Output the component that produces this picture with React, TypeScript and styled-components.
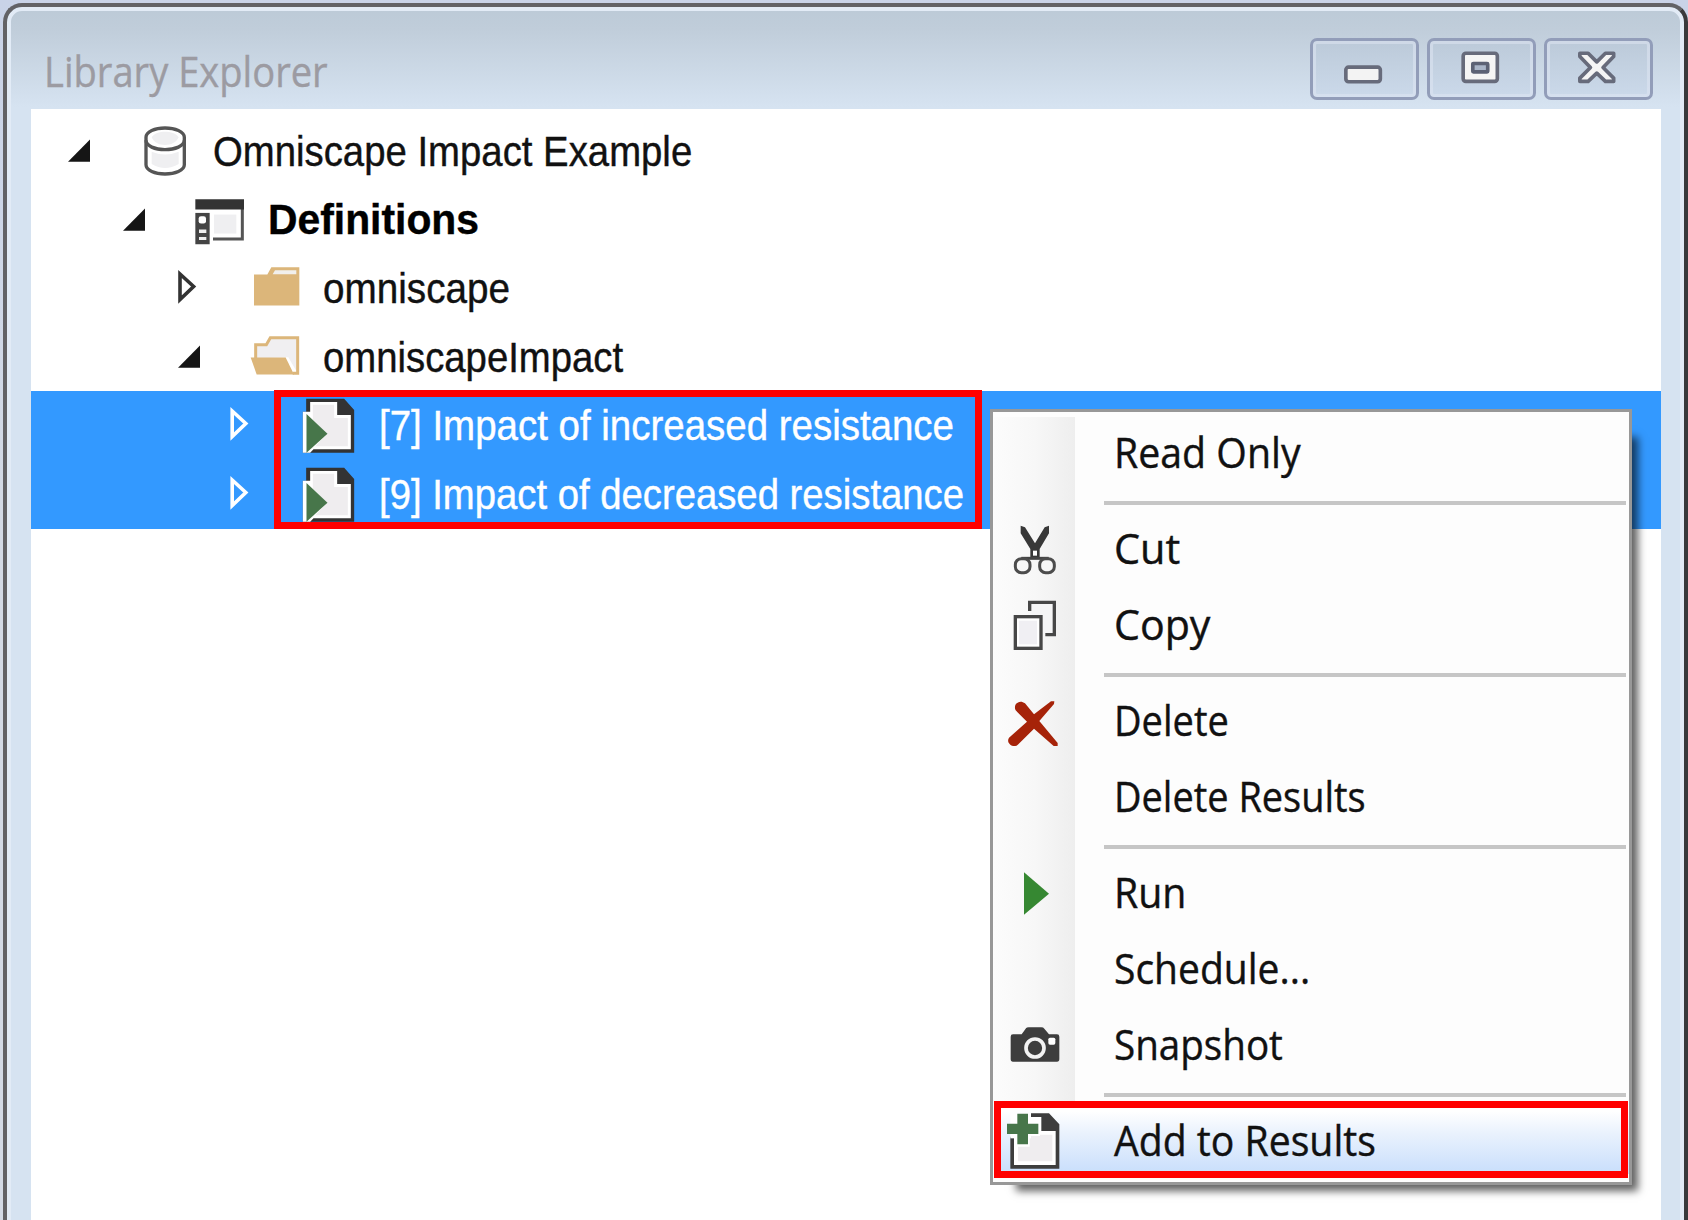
import React, { useLayoutEffect, useRef, useState } from "react";
import styled, { createGlobalStyle, css } from "styled-components";

const GlobalStyle = createGlobalStyle`
  html, body { margin: 0; padding: 0; }
  body { background: #c6d0e2; overflow: hidden; }
  *, *::before, *::after { box-sizing: border-box; }
`;

const Screen = styled.div`
  position: relative;
  width: 1688px;
  height: 1220px;
  overflow: hidden;
  background: linear-gradient(#c9d3e8, #d3dae6 40%);
  padding: 3px 0 0 3px;
`;

const WindowFrame = styled.div`
  display: flex;
  flex-direction: column;
  width: 1685px;
  height: 1240px;
  border: 4px solid #626266;
  border-right-color: #3a3a3c;
  border-radius: 19px 19px 0 0;
  background: linear-gradient(#bccad7 0, #c0cdda 22px, #d6e3f1 100px);
  box-shadow: inset 0 0 0 4px #e2ebf6;
  padding: 0 23.5px 0 24px;
`;

const TitleBar = styled.header`
  display: flex;
  justify-content: space-between;
  height: 102px;
  padding: 30.5px 7.5px 0 13px;
`;

const WindowButtons = styled.div`
  display: flex;
  gap: 7.5px;
`;

const WindowButton = styled.button`
  width: 109.5px;
  height: 62px;
  padding: 0;
  border: 3px solid #929db9;
  border-radius: 7px;
  background: linear-gradient(#bccad9, #cbd9ea);
  box-shadow: inset 0 0 0 3px rgba(222, 230, 242, 0.55);
`;

const ButtonGlyph = styled.svg`
  display: block;
  width: 109.5px;
  height: 62px;
  margin: -3px;
`;

const Client = styled.main`
  flex: 1;
  background: #fff;
  padding-top: 8px;
`;

const Row = styled.div<{ $level: number; $selected?: boolean }>`
  display: grid;
  grid-template-columns: 72px 73px auto;
  height: 68.6px;
  padding-left: ${(p) => 37 + p.$level * 55.2}px;
  color: ${(p) => (p.$selected ? "#fff" : "#111")};
  ${(p) =>
    p.$selected &&
    css`
      background: #3399ff;
    `}
`;

const TreeIcon = styled.svg`
  width: 60px;
  height: 68.75px;
  overflow: visible;
`;

const treeFont = css`
  font: 42px/69px "Liberation Sans", Arial, sans-serif;
`;
const uiFont = css`
  font: 42px/69px "Open Sans", "Segoe UI", sans-serif;
`;

const TextSpan = styled.span<{ $ui?: boolean; $bold?: boolean; $dim?: boolean }>`
  display: block;
  width: max-content;
  white-space: nowrap;
  transform-origin: left center;
  -webkit-text-stroke: 0.4px currentColor;
  ${(p) => (p.$ui ? uiFont : treeFont)}
  ${(p) => p.$bold && "font-weight: 700; color: #000; line-height: 67px;"}
  ${(p) => p.$dim && "color: #9c9ba2; line-height: 65px;"}
`;

type LabelProps = { width: number; ui?: boolean; bold?: boolean; dim?: boolean; children: string };

/* Condenses a line of text horizontally to the given advance width. */
function Label({ width, ui, bold, dim, children }: LabelProps) {
  const ref = useRef<HTMLSpanElement>(null);
  const [scale, setScale] = useState(1);
  useLayoutEffect(() => {
    if (ref.current) setScale(width / ref.current.offsetWidth);
  }, [width, children]);
  return (
    <TextSpan ref={ref} $ui={ui} $bold={bold} $dim={dim} style={{ transform: `scaleX(${scale})` }}>
      {children}
    </TextSpan>
  );
}

const MenuLayer = styled.div`
  position: absolute;
  left: 990px;
  top: 409px;
  width: 642px;
  height: 775.5px;
`;

const MenuShadow = styled.div`
  position: absolute;
  inset: 24px 0 0 22px;
  box-shadow: 5px 5px 8px 1px rgba(0, 0, 0, 0.62);
`;

const Menu = styled.div`
  position: relative;
  height: 100%;
  border: 3px solid #989898;
  padding: 5px 3px 0 1px;
  background: #fdfdfd;
`;

const MenuBody = styled.div`
  background: linear-gradient(90deg, #fcfcfc, #f7f7f7 50%, #eeeeee) 0 0 / 81px 685px no-repeat;
`;

const MenuItem = styled.div<{ $active?: boolean }>`
  display: grid;
  grid-template-columns: 113.5px auto;
  height: 76px;
  padding-left: 6px;
  color: #111;
  ${(p) =>
    p.$active &&
    css`
      height: 69px;
      margin-right: -3px;
      background: linear-gradient(#fff 6px, #eaf2fd 40%, #cfe2fc 88%, #c8dffb);
    `}
`;

const MenuIcon = styled.svg`
  width: 60px;
  height: 76px;
  overflow: visible;
`;

const Separator = styled.hr`
  height: 4px;
  margin: 8px 0 8px 110px;
  border: 0;
  background: #c6c6c6;
`;

const Highlight = styled.div<{ $x: number; $y: number; $w: number; $h: number }>`
  position: absolute;
  left: ${(p) => p.$x}px;
  top: ${(p) => p.$y}px;
  width: ${(p) => p.$w}px;
  height: ${(p) => p.$h}px;
  border: 7px solid #f00;
`;

function Twisty({ open, selected }: { open?: boolean; selected?: boolean }) {
  return (
    <TreeIcon viewBox="0 0 60 68.75">
      {open ? (
        <path d="M0 44.8H22V22.5Z" fill="#151515" />
      ) : (
        <path
          d="M2 20 15.6 32.5 2 45.5Z"
          transform={selected ? "translate(-3.8 0)" : undefined}
          fill={selected ? "none" : "#fff"}
          stroke={selected ? "#fff" : "#333"}
          strokeWidth="3.6"
        />
      )}
    </TreeIcon>
  );
}

const DatabaseIcon = () => (
  <TreeIcon viewBox="300 51 180 206.25" stroke="#555" strokeWidth="10">
    <path d="M318 112C318 94 345 84 375 84S433 94 433 112V194C433 211 405 222 375 222S318 211 318 194Z" fill="#fff" />
    <path d="M335 112C342 99 359 95 375 95S409 99 416 112C409 128 393 135 375 135S342 128 335 112Z" fill="#efeff1" stroke="none" />
    <path d="M335 155Q375 172 416 155V192Q375 216 335 192Z" fill="#efeff1" stroke="none" />
    <path d="M318 121C318 138 345 149 375 149S433 138 433 121" fill="none" />
  </TreeIcon>
);

const DefinitionsIcon = () => (
  <TreeIcon viewBox="466 257.25 180 206.25">
    <path d="M520 416H608V320" fill="none" stroke="#555" strokeWidth="9" />
    <path d="M467 297H613V328H467Z" fill="#333" />
    <path d="M523 343H590V400H523Z" fill="#efeff1" />
    <path d="M467 338H510V432H467Z" fill="#444" />
    <rect x="477" y="348" width="22" height="22" rx="7" fill="#fff" />
    <path d="M478 388H500V398H478ZM478 410H500V419H478Z" fill="#eee" />
  </TreeIcon>
);

const FolderIcon = () => (
  <TreeIcon viewBox="630 463.5 180 206.25" fill="#dcb67a">
    <path d="M642 525H682L694 503H778V618H642Z" />
    <path d="M698 524 705 512H769V524Z" fill="#f1efec" />
  </TreeIcon>
);

const OpenFolderIcon = () => (
  <TreeIcon viewBox="630 669.5 180 206.25">
    <path d="M647 776V735H679L691 714H773V820L745 772Z" fill="#f0eff1" />
    <path d="M647 776V735H679L691 714H773V820H758" fill="none" stroke="#dcb67a" strokeWidth="9" />
    <path d="M632 773H737L762 824H650Z" fill="#dcb67a" />
  </TreeIcon>
);

const ScenarioIcon = () => (
  <TreeIcon viewBox="317.5 65 180 206.25">
    <path d="M318 88H432L462 122V250H340L308 250V127H318Z" fill="#333" />
    <path d="M330 98H411V137H452V240H340L330 250H308V127H330Z" fill="#fff" />
    <path d="M338 106H402V146H443V231H345L382 193L338 152Z" fill="#efedef" />
    <path d="M319 134 382 193 319 250Z" fill="#47764a" />
  </TreeIcon>
);

const CutIcon = () => (
  <MenuIcon viewBox="60 369 180 228" fill="none" stroke="#4c4c4c" strokeWidth="9">
    <path d="M122 407 135 412 165 460 194 412 207 407V430L179 477V506H151V477L122 430Z" fill="#383838" stroke="none" />
    <rect x="159" y="482" width="12" height="15" fill="#fff" stroke="none" />
    <path d="M124 505H206" stroke="#444" />
    <rect x="106" y="506" width="44" height="42" rx="18" fill="#f7f7f7" />
    <rect x="179" y="506" width="44" height="42" rx="18" fill="#f7f7f7" />
  </MenuIcon>
);

const CopyIcon = () => (
  <MenuIcon viewBox="60 597 180 228" fill="none" stroke="#474747" strokeWidth="10">
    <path d="M149 663V637H223V734H196" fill="#f5f5f6" stroke="none" />
    <path d="M149 663V637H223V734H196" />
    <rect x="106" y="680" width="77" height="95" fill="#fff" />
    <rect x="117" y="692" width="54" height="71" fill="#f0eff3" stroke="none" />
  </MenuIcon>
);

const DeleteIcon = () => (
  <MenuIcon viewBox="60 75 180 228" fill="#a62309">
    <path d="M107 151C98 134 118 116 135 130L162 163 213 124 223 124 222 132 178 183 233 249V258H221L162 206 115 253C102 267 76 250 87 233L141 185Z" />
  </MenuIcon>
);

const RunIcon = () => (
  <MenuIcon viewBox="60 591 180 228">
    <path d="M132 637 207 701 132 764Z" fill="#368832" />
  </MenuIcon>
);

const CameraIcon = () => (
  <MenuIcon viewBox="60 207 180 228">
    <path d="M92 290Q92 283 99 283H125L138 265Q140 262 146 262H184Q190 262 193 266L207 283H231Q238 283 238 290V357Q238 365 231 365H99Q92 365 92 357Z" fill="#3d3d3d" />
    <circle cx="165" cy="324" r="27" fill="#3d3d3d" stroke="#f2f2f2" strokeWidth="11" />
    <rect x="205" y="293" width="21" height="21" rx="5" fill="#fff" />
  </MenuIcon>
);

const AddResultIcon = () => (
  <MenuIcon viewBox="60 495 180 228">
    <path d="M91 590V686H238V553L207 520H153V590Z" fill="#3d3d3d" />
    <path d="M102 590H153V531H184V573H227V675H102Z" fill="#fff" />
    <path d="M114 620H149V588H180V584H217V664H114Z" fill="#efedef" />
    <path d="M91 520H153V595H91Z" fill="#fff" />
    <path d="M112 521H144V551H175V582H144V613H112V582H81V551H112Z" fill="#47764a" />
  </MenuIcon>
);

export default function App() {
  return (
    <>
      <GlobalStyle />
      <Screen>
        <WindowFrame>
          <TitleBar>
            <Label width={284} ui dim>Library Explorer</Label>
            <WindowButtons>
              <WindowButton aria-label="Minimize">
                <ButtonGlyph viewBox="90 112 328 187">
                  <rect x="197" y="200" width="104" height="44" rx="8" fill="#f3f3f3" stroke="#676b7b" strokeWidth="11" />
                </ButtonGlyph>
              </WindowButton>
              <WindowButton aria-label="Maximize">
                <ButtonGlyph viewBox="441 112 328 187">
                  <rect x="549" y="158" width="103" height="85" rx="8" fill="#f5f5f5" stroke="#676b7b" strokeWidth="11" />
                  <rect x="578" y="189" width="45" height="25" rx="2" fill="#a9b5c8" stroke="#5c6275" strokeWidth="11" />
                </ButtonGlyph>
              </WindowButton>
              <WindowButton aria-label="Close">
                <ButtonGlyph viewBox="792 112 328 187">
                  <path
                    d="M899 158H924L950 184 976 158H1001V168L969 201 1001 233V243H976L950 218 924 243H899V233L931 201 899 168Z"
                    fill="#f5f5f5"
                    stroke="#676b7b"
                    strokeWidth="11"
                    strokeLinejoin="round"
                  />
                </ButtonGlyph>
              </WindowButton>
            </WindowButtons>
          </TitleBar>
          <Client>
            <Row $level={0}><Twisty open /><DatabaseIcon /><Label width={479}>Omniscape Impact Example</Label></Row>
            <Row $level={1}><Twisty open /><DefinitionsIcon /><Label width={211} bold>Definitions</Label></Row>
            <Row $level={2}><Twisty /><FolderIcon /><Label width={187}>omniscape</Label></Row>
            <Row $level={2}><Twisty open /><OpenFolderIcon /><Label width={300}>omniscapeImpact</Label></Row>
            <Row $level={3} $selected><Twisty selected /><ScenarioIcon /><Label width={575}>[7] Impact of increased resistance</Label></Row>
            <Row $level={3} $selected><Twisty selected /><ScenarioIcon /><Label width={585}>[9] Impact of decreased resistance</Label></Row>
          </Client>
        </WindowFrame>

        <Highlight $x={274} $y={390} $w={708} $h={139} />

        <MenuLayer>
          <MenuShadow />
          <Menu>
            <MenuBody>
              <MenuItem><span /><Label width={187} ui>Read Only</Label></MenuItem>
              <Separator />
              <MenuItem><CutIcon /><Label width={66} ui>Cut</Label></MenuItem>
              <MenuItem><CopyIcon /><Label width={96} ui>Copy</Label></MenuItem>
              <Separator />
              <MenuItem><DeleteIcon /><Label width={115} ui>Delete</Label></MenuItem>
              <MenuItem><span /><Label width={252} ui>Delete Results</Label></MenuItem>
              <Separator />
              <MenuItem><RunIcon /><Label width={72} ui>Run</Label></MenuItem>
              <MenuItem><span /><Label width={196} ui>Schedule...</Label></MenuItem>
              <MenuItem><CameraIcon /><Label width={169} ui>Snapshot</Label></MenuItem>
              <Separator />
              <MenuItem $active><AddResultIcon /><Label width={262} ui>Add to Results</Label></MenuItem>
            </MenuBody>
          </Menu>
        </MenuLayer>

        <Highlight $x={994} $y={1101} $w={634} $h={77} />
      </Screen>
    </>
  );
}
